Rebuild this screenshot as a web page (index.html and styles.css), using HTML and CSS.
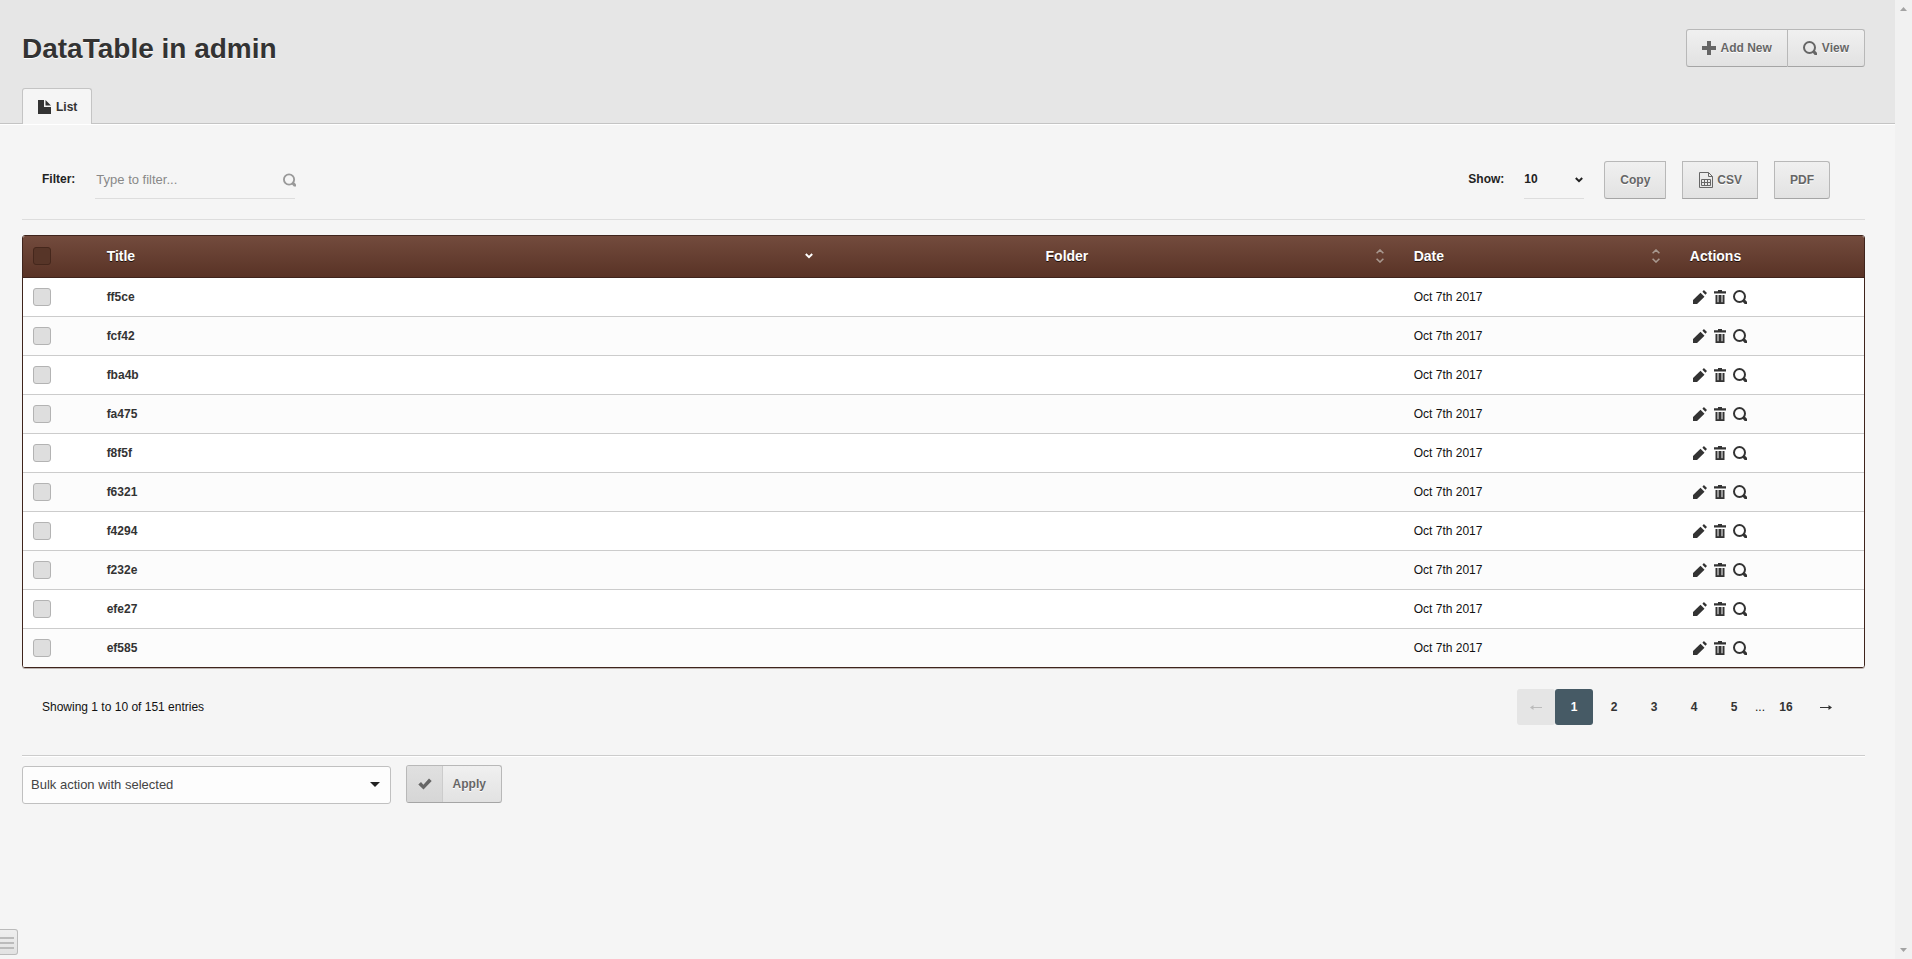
FILE: index.html
```
<!DOCTYPE html>
<html lang="en">
<head>
<meta charset="utf-8">
<title>DataTable in admin</title>
<link rel="stylesheet" href="styles.css">
</head>
<body>
<svg class="sprite" aria-hidden="true">
  <symbol id="i-search" viewBox="0 0 14 14"><circle cx="6.500" cy="6.500" r="5.500" fill="none" stroke="currentColor" stroke-width="2"/><path d="M9.300 11.200l2-2.200 2.700 2.700v2.300h-2.300z" fill="currentColor"/></symbol>
  <symbol id="i-plus" viewBox="0 0 14 14"><path d="M5 0h4v5h5v4H9v5H5V9H0V5h5z" fill="currentColor"/></symbol>
  <symbol id="i-file" viewBox="0 0 13 14"><path d="M0 0h6v7h7v7H0zM7.500 0L13 5.500H7.500z" fill="currentColor"/></symbol>
  <symbol id="i-pencil" viewBox="0 0 14 14"><path d="M0 14v-4l7.500-7.300 4 4L4 14zM9.400 1.700l1.500-1.700L14 3.100l-1.600 1.600z" fill="currentColor"/></symbol>
  <symbol id="i-trash" viewBox="0 0 14 14"><path d="M5 0h4v1.200h4V3.400H1V1.200h4zM2.500 5h2v7.200h1V5h3v7.200h1V5h2v9h-9z" fill="currentColor"/></symbol>
  <symbol id="i-check" viewBox="0 0 14 14"><path d="M.3 7.600l2.700-2.500 2.400 2.700L11 1.600l2.700 2.300-8.200 8.600z" fill="currentColor"/></symbol>
  <symbol id="i-sheet" viewBox="0 0 14 16"><path d="M.5.500h9l4 4v11H.500zM9.500.500v4h4M2.500 7.500h9v6h-9zM2.500 10.500h9M5.500 7.500v6M8.500 7.500v6" fill="none" stroke="currentColor"/></symbol>
  <symbol id="i-down" viewBox="0 0 8 6"><path d="M.8 1L4 4.200 7.200 1" fill="none" stroke="currentColor" stroke-width="2"/></symbol>
  <symbol id="i-sort" viewBox="0 0 8 14"><path d="M.6 4.300L4 1l3.400 3.300M.6 9.700L4 13l3.400-3.300" fill="none" stroke="currentColor" stroke-width="1.600"/></symbol>
  <symbol id="i-prev" viewBox="0 0 12 5"><path d="M0 2.500L3.500 0v2H12v1H3.500v2z" fill="currentColor"/></symbol>
  <symbol id="i-next" viewBox="0 0 12 5"><path d="M12 2.500L8.500 0v2H0v1h8.500v2z" fill="currentColor"/></symbol>
</svg>
<div class="app">
  <header class="header">
    <div class="header-top">
      <h1 class="title">DataTable in admin</h1>
      <div class="group">
        <button class="btn" type="button"><svg class="icon"><use href="#i-plus"/></svg>Add New</button>
        <button class="btn" type="button"><svg class="icon"><use href="#i-search"/></svg>View</button>
      </div>
    </div>
    <nav class="tabs"><a class="tab" href="#list"><svg class="icon icon-tab"><use href="#i-file"/></svg>List</a></nav>
  </header>
  <main class="main" id="list">
    <div class="toolbar">
      <label class="label" for="filter">Filter:</label>
      <div class="filter-box">
        <input class="filter" id="filter" type="text" placeholder="Type to filter...">
        <svg class="icon icon-filter"><use href="#i-search"/></svg>
      </div>
      <label class="label label-show" for="show">Show:</label>
      <div class="show-box">
        <select class="show" id="show"><option>10</option><option>25</option><option>50</option></select>
        <svg class="icon-down"><use href="#i-down"/></svg>
      </div>
      <div class="exports">
        <button class="btn btn-first" type="button">Copy</button>
        <button class="btn btn-mid" type="button"><svg class="icon icon-sheet"><use href="#i-sheet"/></svg>CSV</button>
        <button class="btn btn-last" type="button">PDF</button>
      </div>
    </div>
    <div class="table-wrap">
      <table class="table">
        <colgroup><col class="c-check"><col class="c-title"><col class="c-blank"><col class="c-folder"><col class="c-date"><col class="c-actions"></colgroup>
        <thead>
          <tr>
            <th><input class="check check-all" type="checkbox" aria-label="Select all"></th>
            <th><div class="th">Title<svg class="icon-down"><use href="#i-down"/></svg></div></th>
            <th></th>
            <th><div class="th">Folder<svg class="icon-sort"><use href="#i-sort"/></svg></div></th>
            <th><div class="th">Date<svg class="icon-sort"><use href="#i-sort"/></svg></div></th>
            <th><div class="th">Actions</div></th>
          </tr>
        </thead>
        <tbody id="rows"></tbody>
      </table>
    </div>
    <div class="footer">
      <div class="info">Showing 1 to 10 of 151 entries</div>
      <nav class="pages" aria-label="Pages">
        <div class="pages-start"><button class="page page-off" type="button" disabled aria-label="Previous"><svg class="page-arrow"><use href="#i-prev"/></svg></button><button class="page page-on" type="button">1</button></div>
        <button class="page" type="button">2</button>
        <button class="page" type="button">3</button>
        <button class="page" type="button">4</button>
        <button class="page" type="button">5</button>
        <span class="dots">...</span>
        <button class="page" type="button">16</button>
        <button class="page" type="button" aria-label="Next"><svg class="page-arrow"><use href="#i-next"/></svg></button>
      </nav>
    </div>
    <div class="bulk">
      <div class="bulk-box">
        <select class="bulk-select" aria-label="Bulk action"><option>Bulk action with selected</option></select>
        <svg class="caret" viewBox="0 0 10 5"><path d="M0 0h10L5 5z" fill="currentColor"/></svg>
      </div>
      <button class="apply" type="button"><span class="apply-icon"><svg class="icon"><use href="#i-check"/></svg></span><span class="apply-text">Apply</span></button>
    </div>
  </main>
  <button class="drawer" type="button" aria-label="Open menu"><span class="bar"></span><span class="bar"></span><span class="bar"></span></button>
</div>
<div class="scrollbar" aria-hidden="true">
  <svg class="arrow" viewBox="0 0 7 4"><path d="M0 4h7L3.500 0z" fill="currentColor"/></svg>
  <svg class="arrow" viewBox="0 0 7 4"><path d="M0 0h7L3.500 4z" fill="currentColor"/></svg>
</div>
<script src="rows.js"></script>
</body>
</html>
```

FILE: rows.js
```
const titles = ["ff5ce", "fcf42", "fba4b", "fa475", "f8f5f", "f6321", "f4294", "f232e", "efe27", "ef585"];
const action = (name, icon) =>
  `<a class="action" href="#${name.toLowerCase()}" aria-label="${name}"><svg class="icon"><use href="#${icon}"/></svg></a>`;
document.getElementById("rows").innerHTML = titles.map((title) => `
  <tr>
    <td><input class="check" type="checkbox" aria-label="Select ${title}"></td>
    <td><a class="name" href="#${title}">${title}</a></td>
    <td></td>
    <td></td>
    <td>Oct 7th 2017</td>
    <td><div class="actions">${action("Edit", "i-pencil")}${action("Delete", "i-trash")}${action("View", "i-search")}</div></td>
  </tr>`).join("");
```

FILE: styles.css
```
* { box-sizing: border-box; }
body {
  margin: 0;
  min-height: 100vh;
  display: flex;
  background: #f5f5f5;
  color: #111;
  font: 12px/18px "Liberation Sans", Arial, sans-serif;
}
button, input, select { font: inherit; color: inherit; margin: 0; }
a { color: inherit; text-decoration: none; }
.sprite { position: absolute; width: 0; height: 0; }
.app { flex: 1; min-width: 0; }
.icon { width: 14px; height: 14px; flex: none; display: block; }

.header { background: #e6e6e6; border-bottom: 1px solid #c4c4c4; box-shadow: 0 1px 0 #fff; padding: 29px 30px 0 22px; }
.header-top { display: flex; justify-content: space-between; align-items: flex-start; height: 59px; }
.title { margin: 0; font-size: 28px; line-height: 40px; color: #333; text-shadow: 0 1px 0 #fff; }
.group { display: flex; }
.group .btn:first-child { border-radius: 3px 0 0 3px; }
.group .btn:last-child { border-radius: 0 3px 3px 0; border-left: 0; }
.btn {
  display: flex;
  align-items: center;
  gap: 5px;
  height: 38px;
  padding: 0 15px;
  border: 1px solid #b8b8b8;
  border-bottom-color: #a5a5a5;
  background: linear-gradient(#f0f0f0, #e2e2e2);
  color: #666;
  font-weight: bold;
  text-shadow: 0 1px 0 #fff;
}
.tabs { display: flex; margin-bottom: -1px; }
.tab {
  display: flex;
  align-items: center;
  gap: 5px;
  height: 36px;
  padding: 0 14px 0 15px;
  border: 1px solid #c4c4c4;
  border-bottom: 0;
  border-radius: 3px 3px 0 0;
  background: #f5f5f5;
  color: #333;
  font-weight: bold;
}
.icon-tab { width: 13px; }

.main { padding: 0 30px 0 22px; }
.toolbar { display: flex; align-items: center; padding: 37px 35px 20px 20px; border-bottom: 1px solid #ddd; margin-bottom: 15px; }
.label { font-weight: bold; color: #222; padding-bottom: 2px; }
.filter-box { position: relative; margin-left: 20px; width: 200px; }
.filter {
  width: 100%;
  height: 38px;
  padding: 0 24px 0 1px;
  border: 0;
  border-bottom: 1px solid #ddd;
  background: transparent;
  font-size: 13px;
}
.filter::placeholder { color: #888; }
.icon-filter { position: absolute; top: 12px; right: -1px; width: 13px; color: #999; }
.label-show { margin-left: auto; }
.show-box { position: relative; width: 60px; margin: 0 20px; }
.show {
  appearance: none;
  width: 100%;
  height: 38px;
  padding: 0 0 2px;
  border: 0;
  border-bottom: 1px solid #ddd;
  background: transparent;
  color: #222;
  font-weight: bold;
}
.show-box .icon-down { position: absolute; top: 16px; right: 1px; color: #222; }
.icon-down { width: 8px; height: 6px; }
.icon-sort { width: 8px; height: 14px; color: #a8988f; }
.exports { display: flex; gap: 16px; }
.btn-first { border-radius: 3px 0 0 3px; }
.btn-last { border-radius: 0 3px 3px 0; }
.icon-sheet { height: 16px; }
.exports .btn-mid { padding-left: 16px; gap: 4px; }

.table-wrap { border: 1px solid #3f241c; border-radius: 3px; overflow: hidden; box-shadow: 0 1px 0 #bcb4b2; }
.table { width: 100%; table-layout: fixed; border-collapse: separate; border-spacing: 0; background: #fff; }
.c-check { width: 4%; }
.c-title { width: 40%; }
.c-blank { width: 11%; }
.c-folder { width: 20%; }
.c-date { width: 15%; }
.c-actions { width: 10%; }
.table thead { background: linear-gradient(#734b3d, #583225); }
.table th { height: 42px; padding: 0 20px 1px 10px; text-align: left; border-bottom: 1px solid #3f241c; color: #fff; font-size: 14px; text-shadow: 0 1px 0 #1c0f0b; }
.th { display: flex; justify-content: space-between; align-items: center; }
.table td { height: 39px; padding: 0 10px; border-bottom: 1px solid #ccc; }
.table tr:nth-child(even) td { background: #fcfcfc; }
.table tbody tr:last-child td { height: 38px; border-bottom: 0; }
.name { font-weight: bold; color: #333; }
.check { appearance: none; display: block; width: 18px; height: 18px; border: 1px solid #b3b3b3; border-radius: 3px; background: #dedede; }
.check-all { border-color: #45271c; background: #573528; }
.actions { display: flex; gap: 6px; padding-left: 3px; color: #333; }

.footer { display: flex; justify-content: space-between; align-items: center; padding: 21px 20px 30px; border-bottom: 1px solid #ccc; box-shadow: 0 1px 0 #fff; }
.pages { display: flex; align-items: center; gap: 2px; }
.pages-start { display: flex; }
.page { width: 38px; height: 36px; padding: 0; border: 0; border-radius: 3px; background: transparent; color: #333; font-weight: bold; }
.page-off { background: #e5e5e5; color: #bbb; }
.page-on { background: #465a65; color: #fff; }
.page-arrow { display: block; width: 12px; height: 5px; margin: 0 auto; }
.dots { width: 10px; }

.bulk { display: flex; align-items: flex-start; gap: 15px; padding-top: 9px; }
.bulk-box { position: relative; width: 20%; padding-top: 1px; }
.bulk-select { appearance: none; display: block; width: 100%; height: 38px; padding: 0 24px 0 8px; border: 1px solid #c0c0c0; border-radius: 3px; background: #fdfdfd; color: #444; font-size: 13px; }
.caret { position: absolute; top: 17px; right: 11px; width: 10px; height: 5px; color: #222; }
.apply { display: flex; height: 38px; padding: 0; border: 1px solid #b8b8b8; border-bottom-color: #a5a5a5; border-radius: 3px; background: linear-gradient(#f0f0f0, #e2e2e2); color: #666; font-weight: bold; text-shadow: 0 1px 0 #fff; line-height: 36px; overflow: hidden; }
.apply-icon { display: flex; align-items: center; padding: 0 10px 0 11px; height: 100%; background: linear-gradient(#e0e0e0, #d6d6d6); border-right: 1px solid #ccc; }
.apply-text { padding: 0 15px 0 10px; }

.drawer { position: fixed; left: 0; bottom: 4px; width: 18px; height: 26px; padding: 7px 3px 5px 0; display: flex; flex-direction: column; gap: 3px; border: 1px solid #bbb; border-left: 0; border-radius: 0 3px 3px 0; background: linear-gradient(#eee, #e2e2e2); }
.bar { height: 2px; width: 100%; background: #bbb; }

.scrollbar { width: 17px; background: #f1f1f1; color: #a3a3a3; display: flex; flex-direction: column; justify-content: space-between; align-items: center; padding: 7px 0; }
.arrow { width: 7px; height: 4px; }
```
